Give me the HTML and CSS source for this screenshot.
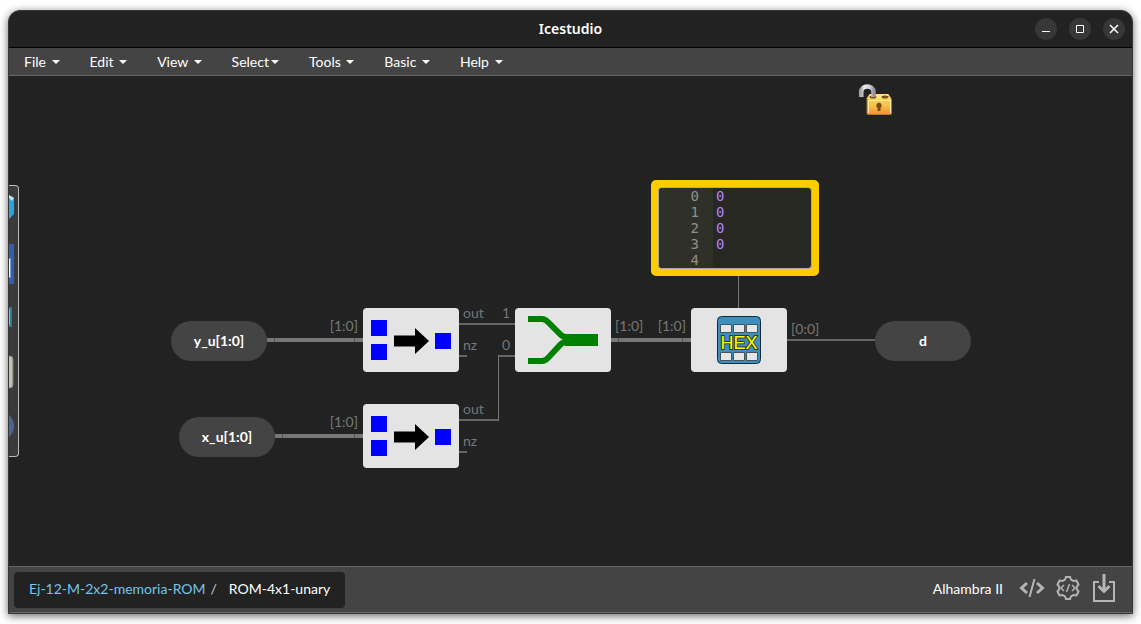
FILE: index.html
```html
<!DOCTYPE html>
<html lang="en">
<head>
<meta charset="utf-8">
<title>Icestudio</title>
<link rel="stylesheet" href="styles.css">
</head>
<body>
<div class="window">
  <header class="titlebar">
    <h1 class="title">Icestudio</h1>
    <div class="window-buttons">
      <button class="window-button" aria-label="Minimize"><svg width="22" height="22"><path d="M7 13.5h8" /></svg></button>
      <button class="window-button" aria-label="Maximize"><svg width="22" height="22"><path d="M7.500 7.500h7v7h-7z" /></svg></button>
      <button class="window-button" aria-label="Close"><svg width="22" height="22"><path stroke-width="1.500" d="M7 7l8 8M15 7l-8 8" /></svg></button>
    </div>
  </header>

  <nav class="menubar">
    <button class="menu">File <span class="caret"></span></button>
    <button class="menu">Edit <span class="caret"></span></button>
    <button class="menu">View <span class="caret"></span></button>
    <button class="menu">Select<span class="caret"></span></button>
    <button class="menu">Tools <span class="caret"></span></button>
    <button class="menu">Basic <span class="caret"></span></button>
    <button class="menu">Help <span class="caret"></span></button>
  </nav>

  <main class="canvas">
    <svg class="wires" width="1124" height="490">
      <g class="bus">
        <path d="M258 264H354M266 360H354M602 264H682" />
      </g>
      <g class="wire">
        <path d="M450 248H506M450 280H458M450 344H490M489 280H506M450 376H458M778 264H866" />
      </g>
      <path class="wire-v" d="M489.500 279V345M729.500 200V232" />
      <path class="joint" d="M265.500 262v4M345.500 262v4M273.500 358v4M345.500 358v4M609.500 262v4M673.500 262v4" />
    </svg>

    <div class="pin pin-y">y_u[1:0]</div>
    <div class="pin pin-x">x_u[1:0]</div>
    <div class="pin pin-d">d</div>

    <div class="block block-or-y">
      <span class="port port-in">[1:0]</span>
      <svg width="96" height="64"><path fill="#00f" d="M8 12h16v16H8zM8 36h16v16H8zM72 25h16v16H72z" /><path d="M31 27.500h21V20l14 13-14 13v-7.500H31z" /></svg>
      <span class="port port-out port-first">out</span>
      <span class="port port-out port-second">nz</span>
    </div>
    <div class="block block-or-x">
      <span class="port port-in">[1:0]</span>
      <svg width="96" height="64"><path fill="#00f" d="M8 12h16v16H8zM8 36h16v16H8zM72 25h16v16H72z" /><path d="M31 27.500h21V20l14 13-14 13v-7.500H31z" /></svg>
      <span class="port port-out port-first">out</span>
      <span class="port port-out port-second">nz</span>
    </div>
    <div class="block block-join">
      <span class="port port-in port-first">1</span>
      <span class="port port-in port-second">0</span>
      <svg width="96" height="64" fill="none" stroke="green" stroke-width="6"><path d="M13 11h14q3 0 6 3l13 13q3 2.500 7 2.500h10M13 53h14q3 0 6-3l13-14q3-2.500 7-2.500h10" /><path stroke-width="12" d="M50 32h33" /></svg>
      <span class="port port-out">[1:0]</span>
    </div>
    <div class="block block-rom">
      <span class="port port-in">[1:0]</span>
      <svg width="96" height="64">
        <rect x="26.500" y="8.500" width="43" height="47" rx="4" fill="#3d8fbf" stroke="#182a35" />
        <path fill="#e6e6e6" stroke="#40545f" d="M29.500 16.500h11v8h-11zM42.500 16.500h11v8h-11zM55.500 16.500h11v8h-11zM29.500 44.500h11v8h-11zM42.500 44.500h11v8h-11zM55.500 44.500h11v8h-11z" />
        <text class="hex" x="48" y="41">HEX</text>
      </svg>
      <span class="port port-out port-low">[0:0]</span>
    </div>

    <div class="memory">
      <div class="editor">
        <ol class="gutter"><li>0</li><li>1</li><li>2</li><li>3</li><li>4</li></ol>
        <textarea class="code" aria-label="Memory contents" spellcheck="false">0
0
0
0</textarea>
      </div>
    </div>

    <button class="lock" aria-label="Unlock block">
      <svg width="36" height="34">
        <defs>
          <linearGradient id="gold" x2="0" y2="1"><stop offset="0" stop-color="#f5d34b" /><stop offset=".5" stop-color="#fbc64c" /><stop offset="1" stop-color="#f28f35" /></linearGradient>
          <linearGradient id="steel"><stop offset="0" stop-color="#a5a5aa" /><stop offset=".25" stop-color="#ececf0" /><stop offset=".7" stop-color="#d0d0d6" /><stop offset="1" stop-color="#95959b" /></linearGradient>
        </defs>
        <path fill="url(#gold)" stroke="#b9791c" d="M11.500 11.500h19l3 5v14q0 1-1 1H10q-1 0-1-1V15z" />
        <path fill="#ffe27a" d="M12 11h18l3 5H9z" />
        <ellipse cx="15" cy="14" rx="3.500" ry="1.500" fill="#7c5418" /><ellipse cx="27" cy="14" rx="3.500" ry="1.500" fill="#7c5418" />
        <path fill="none" stroke="#fff0a8" d="M10.500 30V17.500h22V30" />
        <path fill="none" stroke="url(#steel)" stroke-width="4.500" d="M3.200 14V9C3.200 1.500 15.500 1.500 15.500 9v5" />
        <path fill="#73501b" d="M21 19.500a3 3 0 0 1 1.500 5.400V28h-3v-3.100A3 3 0 0 1 21 19.500" />
      </svg>
    </button>

    <aside class="toolbox" aria-label="Toolbox">
      <svg width="9" height="270">
        <path fill="#28a5df" d="M0 11l5 1v16L0 33z" /><path fill="#b8e4fa" d="M0 9l2 1 3 2-2 3-3-3z" />
        <path fill="#315fb0" d="M0 58h5v40H0z" /><path fill="#fff" stroke="#849bc9" d="M-4 72.500h5.500v19H-4z" />
        <path fill="#7ac8dc" stroke="#277f9b" stroke-width="2" d="M-4 122h6v18h-6z" />
        <rect x="-8" y="170" width="12" height="32" rx="3" fill="#bfc0b8" stroke="#777970" />
        <circle cx="-10" cy="240" r="15" fill="#4d6490" />
      </svg>
    </aside>
  </main>

  <footer class="statusbar">
    <nav class="crumbs" aria-label="Design path">
      <a class="crumb-link" href="#">Ej-12-M-2x2-memoria-ROM</a><span class="slash">/</span><span>ROM-4x1-unary</span>
    </nav>
    <div class="board">
      <span class="board-name">Alhambra II</span>
      <button class="tool" aria-label="Verify"><svg width="26" height="28" stroke-width="3"><path d="M8 9L2.500 14 8 19M18 9l5.500 5-5.500 5" /><path stroke-width="2" d="M15.500 5l-5 18" /></svg></button>
      <button class="tool" aria-label="Build"><svg width="26" height="28" stroke-width="1.500"><path stroke-width="2" d="M10 5.500l1-2.500h4l1 2.500 2.500 1.500 3-.5 2 4-1.700 2v3l1.700 2-2 4-3-.5-2.500 1.500-1 2.500h-4l-1-2.500L7.500 21l-3 .5-2-4 1.700-2v-3l-1.700-2 2-4 3 .5z" /><path d="M9 11l-3 3 3 3M17 11l3 3-3 3M14.500 10l-3 8" /></svg></button>
      <button class="tool" aria-label="Upload"><svg width="22" height="28" stroke-width="2"><path d="M6 8H1v19h20V8h-5" /><path d="M11 0v17M5.500 12l5.500 5.500 5.500-5.500" stroke-width="3" /></svg></button>
    </div>
  </footer>
</div>
</body>
</html>
```
FILE: styles.css
```css
* { box-sizing: border-box; }

body {
  display: flex;
  min-height: 100vh;
  margin: 0;
  padding: 10px 8px;
  background: #fff;
  color: #fff;
  font: 14px/20px Lato, sans-serif;
}

button {
  padding: 0;
  border: 0;
  background: none;
  color: inherit;
  font: inherit;
}

svg { display: block; }

.window {
  flex: 1;
  display: flex;
  flex-direction: column;
  overflow: hidden;
  border: 1px solid #363838;
  border-radius: 12px 12px 0 0;
  background: #222;
  box-shadow: 0 2px 8px rgba(0, 0, 0, .6);
}

.titlebar {
  display: grid;
  grid-template-columns: 1fr auto 1fr;
  align-items: center;
  height: 37px;
  border-bottom: 1px solid #000;
}

.title {
  grid-column: 2;
  margin: 0;
  font: 600 14px/20px "Noto Sans", sans-serif;
}

.window-buttons {
  display: flex;
  justify-content: flex-end;
  gap: 12px;
  padding-right: 7px;
}

.window-button {
  width: 22px;
  height: 22px;
  border-radius: 50%;
  background: #373737;
}

.window-button svg {
  fill: none;
  stroke: #fff;
}

.menubar {
  display: flex;
  height: 28px;
  border-bottom: 1px solid #666;
  background: #444;
}

.menu {
  display: flex;
  align-items: center;
  padding: 0 15px;
  white-space: pre;
}

.caret {
  margin-top: 1px;
  margin-left: 2px;
  border: 4px solid transparent;
  border-top-color: #fff;
  border-bottom: 0;
}

.canvas {
  position: relative;
  flex: 1;
  min-height: 420px;
}

.wires {
  position: absolute;
  top: 0;
  left: 0;
  fill: none;
}

.bus { stroke: #777; stroke-width: 4; }
.wire { stroke: #666; stroke-width: 2; }
.wire-v { stroke: #777; }
.joint { stroke: #555; }

.pin {
  position: absolute;
  width: 96px;
  height: 40px;
  border-radius: 20px;
  background: #444;
  font-weight: 700;
  line-height: 40px;
  text-align: center;
}

.pin-y { left: 162px; top: 245px; }
.pin-x { left: 170px; top: 341px; }
.pin-d { left: 866px; top: 245px; }

.block {
  position: absolute;
  width: 96px;
  height: 64px;
  border-radius: 4px;
  background: #e4e4e4;
}

.block-or-y { left: 354px; top: 232px; }
.block-or-x { left: 354px; top: 328px; }
.block-join { left: 506px; top: 232px; }
.block-rom { left: 682px; top: 232px; }

.port {
  position: absolute;
  top: 8px;
  color: #777;
}

.port-in { right: 100%; margin-right: 5px; }
.port-out { left: 100%; margin-left: 4px; }
.port-first { top: -5px; }
.port-second { top: 27px; }
.port-low { top: 11px; }

.hex {
  fill: #ff0;
  stroke: #343b12;
  stroke-width: 2px;
  paint-order: stroke;
  font: 18px "Liberation Sans", sans-serif;
  text-anchor: middle;
}

.memory {
  position: absolute;
  left: 642px;
  top: 104px;
  width: 168px;
  height: 96px;
  padding: 7px;
  border-radius: 5px;
  background: #fc0;
}

.editor {
  display: flex;
  height: 100%;
  overflow: hidden;
  border: 1px solid #aaa;
  border-radius: 4px;
  background: #272822;
  font: 14px/16px "DejaVu Sans Mono", monospace;
}

.gutter {
  width: 54px;
  margin: 0;
  padding: 0 14px 0 0;
  background: #2f3129;
  color: #8f908a;
  list-style: none;
  text-align: right;
}

.code {
  flex: 1;
  min-width: 0;
  padding: 0 3px;
  border: 0;
  overflow: hidden;
  resize: none;
  background: none;
  color: #ae81ff;
  font: inherit;
}

.lock {
  position: absolute;
  left: 849px;
  top: 7px;
}

.toolbox {
  position: absolute;
  left: 0;
  top: 109px;
  width: 10px;
  height: 272px;
  overflow: hidden;
  border: 1px solid #bbb;
  border-left: 0;
  border-radius: 0 4px 4px 0;
  background: #3a3a3a;
}

.statusbar {
  display: flex;
  align-items: center;
  justify-content: space-between;
  height: 47px;
  padding: 0 17px 0 5px;
  border: solid #666;
  border-width: 1px 0;
  background: #444;
}

.crumbs {
  display: flex;
  padding: 7px 15px 9px;
  border-radius: 4px;
  background: #222;
}

.crumb-link {
  color: #75c5ec;
  text-decoration: none;
}

.slash {
  padding: 0 12px 0 5px;
  color: #ccc;
}

.board {
  display: flex;
  align-items: center;
  padding-bottom: 4px;
}

.board-name {
  margin-right: 16px;
  padding-top: 2px;
}

.tool + .tool { margin-left: 10px; }
.tool:last-child { margin-left: 12px; }

.tool svg {
  fill: none;
  stroke: #b5b5b5;
}
```
